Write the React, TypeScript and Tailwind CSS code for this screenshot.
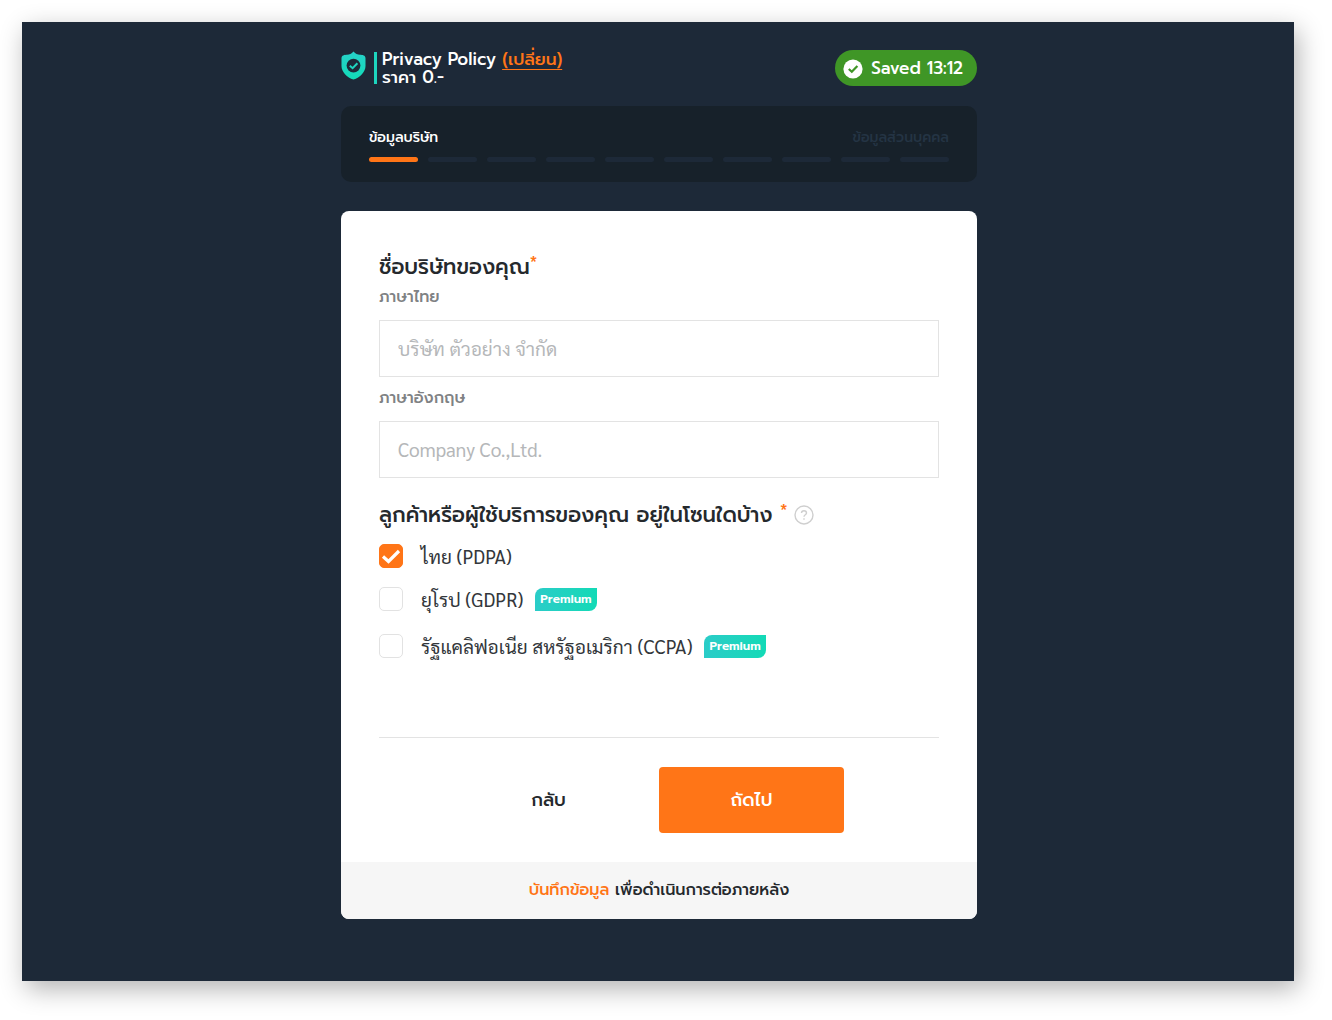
import type { ReactNode } from "react";

const heading = "font-['Prompt','Anuphan','Noto_Sans_Thai','Noto_Sans',sans-serif]";
const body = "font-['Sarabun','Noto_Sans_Thai_Looped','Noto_Sans',sans-serif]";

function ShieldIcon() {
  return (
    <svg width="25" height="30" viewBox="0 0 25 30" aria-hidden="true">
      <defs>
        <linearGradient id="shield" x1="0" y1="0" x2="0" y2="1">
          <stop offset="0" stopColor="#27d0c9" />
          <stop offset="1" stopColor="#12dcb8" />
        </linearGradient>
      </defs>
      <path d="M12.5 1.5C14.5 3.8 16.5 4.6 19 4.8C21.5 5 24.5 5.2 24.5 8.2V16C24.5 22 19 27.4 12.5 29.6C6 27.4 0.5 22 0.5 16V8.2C0.5 5.2 3.5 5 6 4.8C8.5 4.6 10.5 3.8 12.5 1.5Z" fill="url(#shield)" />
      <circle cx="12.5" cy="15.6" r="6.9" fill="#1d2a39" />
      <path d="M8.8 15.8L11.6 18.2L16.4 13.2" fill="none" stroke="#1fd5c0" strokeWidth="2" />
    </svg>
  );
}

function Premium() {
  return (
    <span className={`${heading} flex h-[23px] items-center rounded-tl-lg rounded-br-lg bg-linear-to-r from-[#2accc8] to-[#12dab6] px-[5px] text-[12px] font-semibold text-white`}>
      Premium
    </span>
  );
}

function Field({ id, label, placeholder }: { id: string; label: string; placeholder: string }) {
  return (
    <div>
      <label htmlFor={id} className={`${heading} block text-[16px] leading-6 font-medium text-[#7f8284]`}>
        {label}
      </label>
      <input
        id={id}
        type="text"
        placeholder={placeholder}
        className="mt-[11px] block h-[57px] w-full border border-[#e3e3e3] bg-white px-[18px] pb-[2px] text-[19px] text-[#2b2f33] outline-none placeholder:text-[#b5b7b9]"
      />
    </div>
  );
}

function Zone({ id, checked, children, premium }: { id: string; checked?: boolean; children: ReactNode; premium?: boolean }) {
  return (
    <div className="flex items-center">
      <span className="grid size-6 shrink-0">
        <input
          id={id}
          type="checkbox"
          defaultChecked={checked}
          className="peer col-start-1 row-start-1 size-6 appearance-none rounded-[5px] border border-[#e2e2e2] bg-white checked:border-[#ff7517] checked:bg-[#ff7517]"
        />
        <svg viewBox="0 0 24 24" className="pointer-events-none invisible col-start-1 row-start-1 peer-checked:visible" aria-hidden="true">
          <path d="M4 12.5L9.5 17.5L20 7" fill="none" stroke="white" strokeWidth="3.2" />
        </svg>
      </span>
      <label htmlFor={id} className="ml-[18px] text-[19px] leading-7 text-[#33373b]">
        {children}
      </label>
      {premium && <div className="ml-3"><Premium /></div>}
    </div>
  );
}

export default function App() {
  return (
    <div className={`${body} bg-white pt-[22px] pr-[38px] pb-[39px] pl-[22px]`}>
      <main className="bg-[#1d2938] pt-7 pr-4 pb-[62px] pl-[18px] shadow-[4px_8px_24px_rgba(0,0,0,0.3)]">
        <div className="mx-auto max-w-[636px]">
          <header className={`${heading} flex items-start justify-between font-medium`}>
            <div className="flex">
              <ShieldIcon />
              <div className="mt-[2px] ml-2 h-[32px] w-[3px] bg-[#1dd5be]" />
              <div className="ml-[5px] text-[17px] leading-[18px] text-white">
                <h1>
                  Privacy Policy <a href="#change" className="text-[#ff7517] underline underline-offset-4">(เปลี่ยน)</a>
                </h1>
                <p>ราคา 0.-</p>
              </div>
            </div>
            <div className="flex h-9 items-center gap-2 rounded-full bg-[#3f9626] pt-[2px] pr-[14px] pb-px pl-[8px] text-[17px] text-white">
              <svg width="20" height="20" viewBox="0 0 20 20" aria-hidden="true">
                <circle cx="10" cy="10" r="9.6" fill="white" />
                <path d="M5.8 10L8.8 12.8L14.4 7" fill="none" stroke="#3f9626" strokeWidth="2.2" />
              </svg>
              Saved 13:12
            </div>
          </header>

          <section className="mt-5 rounded-[10px] bg-[#17212a] px-7 pt-5 pb-5">
            <div className={`${heading} flex justify-between text-[14px] leading-6 font-medium`}>
              <span className="text-white">ข้อมูลบริษัท</span>
              <span className="text-[#243444]">ข้อมูลส่วนบุคคล</span>
            </div>
            <div className="mt-[7px] grid grid-cols-10 gap-[10px]">
              {Array.from({ length: 10 }, (_, i) => (
                <div key={i} className={i === 0 ? "h-[5px] rounded-full bg-[#ff7517]" : "h-[5px] rounded-full bg-[#1d2938]"} />
              ))}
            </div>
          </section>

          <form className="mt-[29px] overflow-hidden rounded-lg bg-white">
            <div className="px-[38px] pt-[38px] pb-[29px]">
              <h2 className={`${heading} text-[21px] leading-9 font-medium text-[#25292d]`}>
                ชื่อบริษัทของคุณ<sup className="top-[-5px] text-[17px] text-[#ff7517]">*</sup>
              </h2>
              <div className="flex flex-col gap-[9px]">
                <Field id="name-th" label="ภาษาไทย" placeholder="บริษัท ตัวอย่าง จำกัด" />
                <Field id="name-en" label="ภาษาอังกฤษ" placeholder="Company Co.,Ltd." />
              </div>
              <fieldset className="mt-[19px]">
                <legend className={`${heading} flex items-center text-[21px] leading-9 font-medium text-[#25292d]`}>
                  <span>
                    ลูกค้าหรือผู้ใช้บริการของคุณ อยู่ในโซนใดบ้าง <sup className="top-[-5px] text-[17px] text-[#ff7517]">*</sup>
                  </span>
                  <svg width="20" height="20" viewBox="0 0 20 20" className="ml-[6px]" fill="none" stroke="#cfcfcf" strokeWidth="1.4" aria-hidden="true">
                    <circle cx="10" cy="10" r="9" />
                    <path d="M7.5 8.1C7.5 6.6 8.6 5.7 10 5.7S12.5 6.6 12.5 8C12.5 9.8 10 9.8 10 11.8M10 13.2V14.8" />
                  </svg>
                </legend>
                <div className="mt-[9px] flex flex-col">
                  <Zone id="pdpa" checked>ไทย (PDPA)</Zone>
                  <div className="mt-[15px]"><Zone id="gdpr" premium>ยุโรป (GDPR)</Zone></div>
                  <div className="mt-[19px]"><Zone id="ccpa" premium>รัฐแคลิฟอเนีย สหรัฐอเมริกา (CCPA)</Zone></div>
                </div>
              </fieldset>
              <hr className="mt-[77px] border-[#e3e3e3]" />
              <div className={`${heading} mt-[29px] grid grid-cols-2 text-[18px] font-medium`}>
                <button type="button" className="mr-[18px] h-[66px] w-[185px] justify-self-end text-[#25292d]">กลับ</button>
                <button type="submit" className="h-[66px] w-[185px] rounded-[4px] bg-[#ff7517] text-white">ถัดไป</button>
              </div>
            </div>
            <p className={`${heading} bg-[#f6f6f6] py-4 text-center text-[16px] leading-[25px] font-medium text-[#25292d]`}>
              <a href="#save" className="text-[#ff7517]">บันทึกข้อมูล</a> เพื่อดำเนินการต่อภายหลัง
            </p>
          </form>
        </div>
      </main>
    </div>
  );
}
